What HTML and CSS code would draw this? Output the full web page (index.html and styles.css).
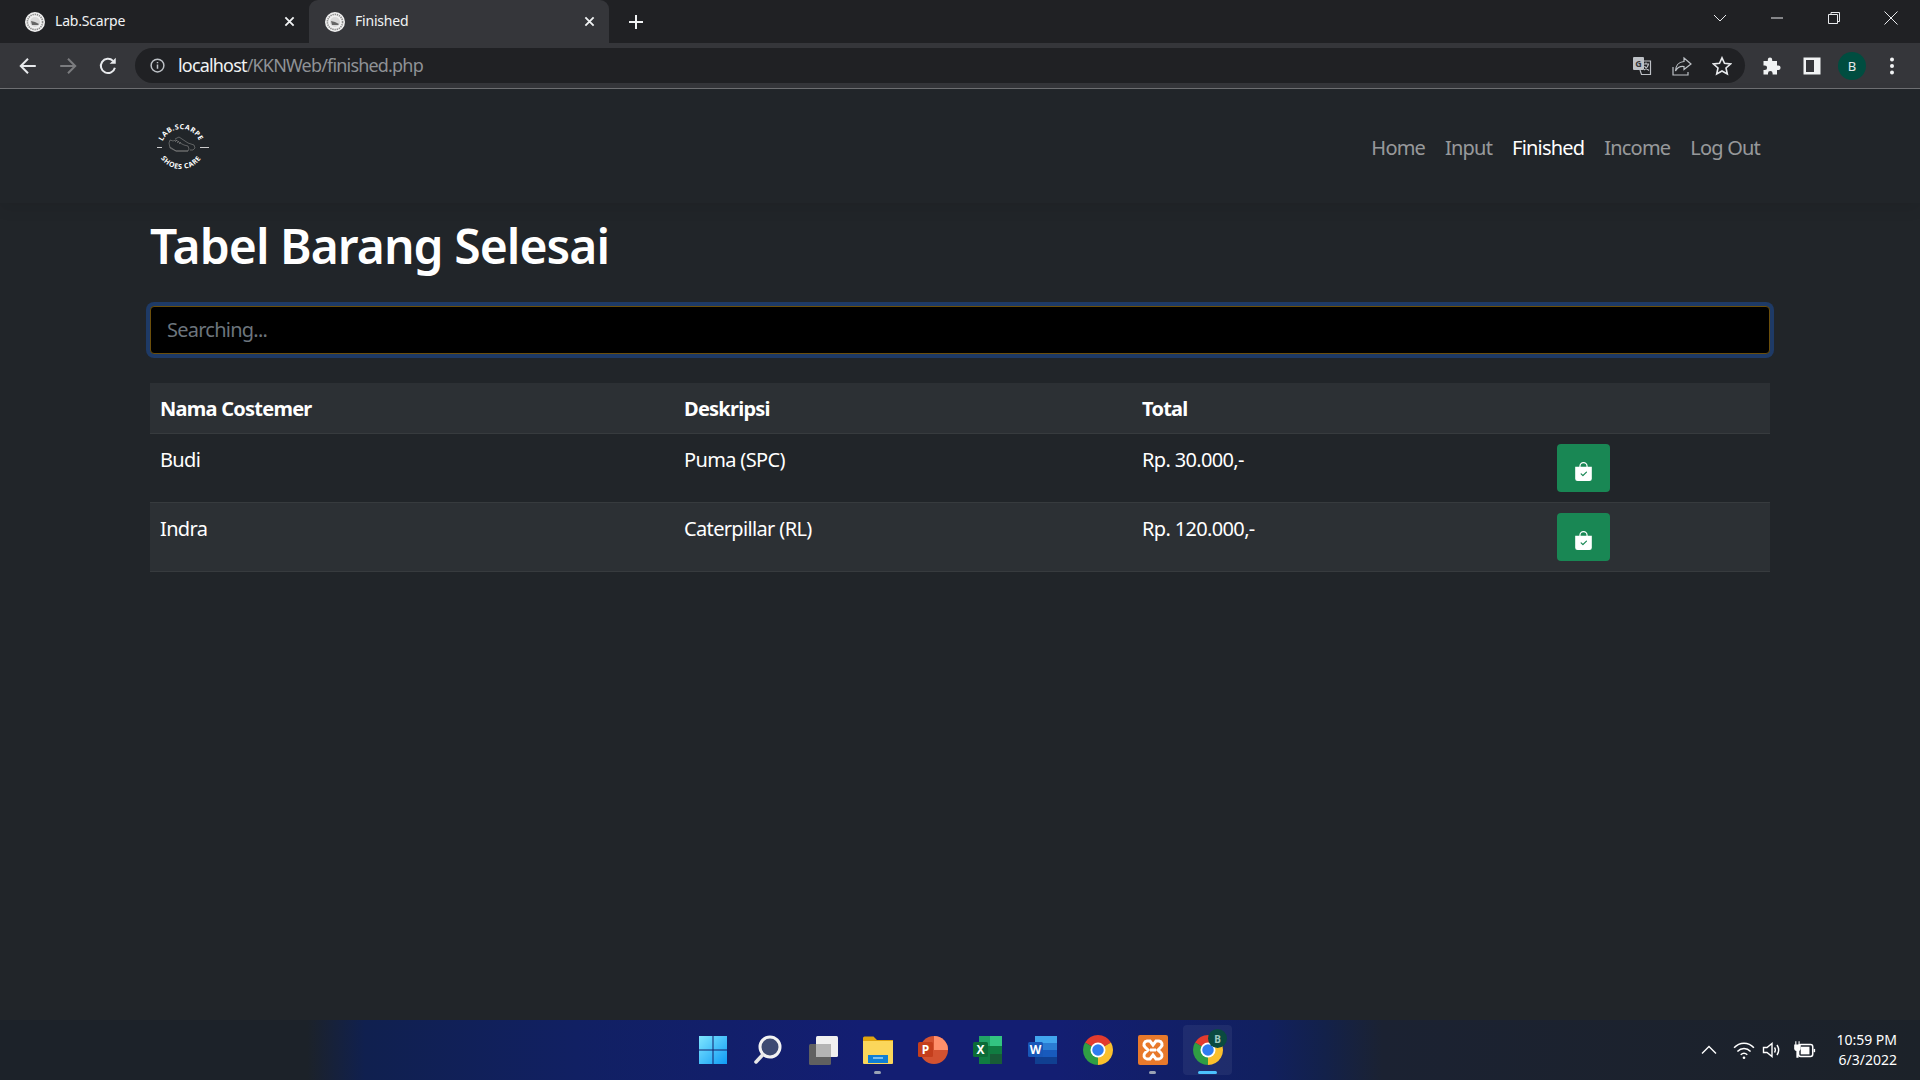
FILE: index.html
```html
<!DOCTYPE html>
<html lang="id">
<head>
    <meta charset="UTF-8">
    <meta name="viewport" content="width=device-width, initial-scale=1.0">
    <title>Finished</title>
    <link rel="stylesheet" href="styles.css">
</head>
<body>
    <svg class="defs" width="0" height="0">
        <symbol id="favicon" viewBox="0 0 20 20">
            <circle cx="10" cy="10" r="10" fill="#f1f1f1"/>
            <circle cx="10" cy="10" r="7.6" fill="none" stroke="#8d8d8d" stroke-width="1.6" stroke-dasharray="1.4 .8"/>
            <circle cx="10" cy="10" r="5" fill="#d9d9d9"/>
            <path d="M6 9l4 1 4 2-1 1H7z" fill="#666"/>
        </symbol>
        <symbol id="chrome" viewBox="0 0 24 24">
            <path d="M12 12L1.61 6A12 12 0 0 1 22.39 6Z" fill="#e33b2e"/>
            <path d="M12 12L22.39 6A12 12 0 0 1 12 24Z" fill="#fbc02d"/>
            <path d="M12 12L12 24A12 12 0 0 1 1.61 6Z" fill="#2f9e44"/>
            <circle cx="12" cy="12" r="6" fill="#fff"/>
            <circle cx="12" cy="12" r="4.6" fill="#2f7df0"/>
        </symbol>
        <symbol id="bag" viewBox="0 0 16 16">
            <path fill="#fff" fill-rule="evenodd" d="M10.5 3.5a2.5 2.5 0 0 0-5 0V4h5v-.5zm1 0V4H15v10a2 2 0 0 1-2 2H3a2 2 0 0 1-2-2V4h3.5v-.5a3.5 3.5 0 1 1 7 0zm-.646 5.354a.5.5 0 0 0-.708-.708L7.5 10.793 6.354 9.646a.5.5 0 1 0-.708.708l1.5 1.5a.5.5 0 0 0 .708 0l3-3z"/>
        </symbol>
    </svg>

    <!-- browser -->
    <div class="tabstrip">
        <div class="tab">
            <svg class="favicon"><use href="#favicon"/></svg>
            <span class="tab-title">Lab.Scarpe</span>
            <svg class="tab-close" viewBox="0 0 12 12"><path d="M1.5 1.5l9 9M10.5 1.5l-9 9"/></svg>
        </div>
        <div class="tab tab-active">
            <svg class="favicon"><use href="#favicon"/></svg>
            <span class="tab-title">Finished</span>
            <svg class="tab-close" viewBox="0 0 12 12"><path d="M1.5 1.5l9 9M10.5 1.5l-9 9"/></svg>
        </div>
        <svg class="tab-new" viewBox="0 0 16 16"><path d="M8 1v14M1 8h14"/></svg>
        <div class="window-btns">
            <svg class="win-icon" viewBox="0 0 14 14"><path d="M1 4l6 6 6-6"/></svg>
            <svg class="win-icon" viewBox="0 0 14 14"><path d="M1 7h12"/></svg>
            <svg class="win-icon" viewBox="0 0 14 14"><path d="M1.5 3.5h9v9h-9zM4 3.5V1.5h8.500v9H10.500"/></svg>
            <svg class="win-icon" viewBox="0 0 14 14"><path d="M.5.5l13 13M13.500.5l-13 13"/></svg>
        </div>
    </div>

    <div class="toolbar">
        <svg class="nav-icon" viewBox="0 0 18 18"><path d="M16 9H3M9 2.500L2.500 9 9 15.500"/></svg>
        <svg class="nav-icon nav-icon-off" viewBox="0 0 18 18"><path d="M2 9h13M9 2.500L15.500 9 9 15.500"/></svg>
        <svg class="nav-icon" viewBox="0 0 18 18"><path d="M15.200 10.500A6.400 6.400 0 1 1 13.500 4.400"/><path class="solid" d="M16 1.500V7h-5.500z"/></svg>
        <div class="omnibox">
            <svg class="info-icon" viewBox="0 0 16 16"><circle cx="8" cy="8" r="6.800"/><path d="M8 7v4.500M8 4.200v1.500"/></svg>
            <span class="url"><span class="url-host">localhost</span>/KKNWeb/finished.php</span>
            <div class="omni-actions">
                <svg class="omni-icon" viewBox="0 0 20 20"><rect class="solid-gray" x="1" y="1" width="11" height="13" rx="1"/><text class="omni-letter" x="6.500" y="10.500">G</text><path d="M8 5h10.500v13.500H9.500L8 14M11 8h6M14 6.500V8M12 14c2.500-1.500 4-3.500 4.500-6M12.500 10c1 2 2.500 3.500 4.500 4.500"/></svg>
                <svg class="omni-icon" viewBox="0 0 20 20"><path d="M12 2l7 6-7 5.500V10.500C8 10 5 12 3.500 15 3.500 10 6.500 6 12 5.500zM1 11v8h15v-3"/></svg>
                <svg class="omni-icon omni-star" viewBox="0 0 20 20"><path d="M10 1.800l2.500 5.500 6 .7-4.500 4 1.300 6L10 15l-5.300 3 1.300-6-4.500-4 6-.7z"/></svg>
            </div>
        </div>
        <div class="tool-actions">
            <svg class="tool-icon" viewBox="0 0 20 20"><path fill="#f1f3f4" d="M8 1.500a2.200 2.200 0 0 1 2.200 2.200V5H15v4.400h1.300a2.300 2.300 0 0 1 0 4.600H15v4.500h-4.400v-1.300a2.300 2.300 0 0 0-4.600 0v1.300H1.500V14h1.300a2.300 2.300 0 0 0 0-4.600H1.500V5h4.300V3.700A2.200 2.200 0 0 1 8 1.500z"/></svg>
            <svg class="tool-icon" viewBox="0 0 20 20"><path fill="#f1f3f4" fill-rule="evenodd" d="M1.500 1.500h17v17h-17zM4 4v12h8V4z"/></svg>
            <span class="avatar">B</span>
            <svg class="tool-icon" viewBox="0 0 20 20"><circle cx="10" cy="3.500" r="2" fill="#f1f3f4"/><circle cx="10" cy="10" r="2" fill="#f1f3f4"/><circle cx="10" cy="16.500" r="2" fill="#f1f3f4"/></svg>
        </div>
    </div>

    <!-- page -->
    <main class="page">
        <nav class="navbar">
            <svg class="logo" viewBox="0 0 60 60">
                <defs>
                    <path id="arc-top" d="M10 32A20 20 0 0 1 50 32"/>
                    <path id="arc-bottom" d="M6 28A24 24 0 0 0 54 28"/>
                </defs>
                <text class="logo-text"><textPath href="#arc-top" startOffset="50%" text-anchor="middle">LAB.SCARPE</textPath></text>
                <text class="logo-text"><textPath href="#arc-bottom" startOffset="50%" text-anchor="middle">SHOES CARE</textPath></text>
                <path class="logo-dash" d="M6 30.500h5M49 30.500h9"/>
                <path class="logo-shoe" d="M18 26l1-3 3 1 3-1 4 3 4 2 4 1 1 3-1 2H25l-6-3zM24 22l4-2 3 2 6 4 6 2 1 3-2 2h-3M19 30l6 4h12M24 25l2-2M26 26l2-2M28 27l2-2"/>
            </svg>
            <ul class="nav-links">
                <li class="nav-link">Home</li>
                <li class="nav-link">Input</li>
                <li class="nav-link nav-link-active">Finished</li>
                <li class="nav-link">Income</li>
                <li class="nav-link">Log Out</li>
            </ul>
        </nav>

        <div class="content">
            <h1 class="title">Tabel Barang Selesai</h1>
            <input class="search" type="text" placeholder="Searching...">
            <table class="table">
                <thead>
                    <tr>
                        <th class="col-name">Nama Costemer</th>
                        <th class="col-desc">Deskripsi</th>
                        <th class="col-total">Total</th>
                        <th></th>
                    </tr>
                </thead>
                <tbody>
                    <tr>
                        <td>Budi</td>
                        <td>Puma (SPC)</td>
                        <td>Rp. 30.000,-</td>
                        <td><button class="btn-done"><svg class="bag-icon"><use href="#bag"/></svg></button></td>
                    </tr>
                    <tr class="row-striped">
                        <td>Indra</td>
                        <td>Caterpillar (RL)</td>
                        <td>Rp. 120.000,-</td>
                        <td><button class="btn-done"><svg class="bag-icon"><use href="#bag"/></svg></button></td>
                    </tr>
                </tbody>
            </table>
        </div>
    </main>

    <!-- taskbar -->
    <footer class="taskbar">
        <div class="task-spacer"></div>
        <div class="task-icons">
            <div class="task-item">
                <svg class="task-icon" viewBox="0 0 30 30">
                    <defs><linearGradient id="win" x1="0" y1="0" x2="1" y2="1"><stop offset="0" stop-color="#7fe6ff"/><stop offset="1" stop-color="#0f9bf5"/></linearGradient></defs>
                    <path fill="url(#win)" d="M1 1h13.500v13.500H1zM15.500 1H29v13.500H15.500zM1 15.500h13.500V29H1zM15.500 15.500H29V29H15.500z"/>
                </svg>
            </div>
            <div class="task-item">
                <svg class="task-icon" viewBox="0 0 30 30"><circle cx="17" cy="12" r="10" fill="#3d4a72" stroke="#f2f2f2" stroke-width="3"/><path d="M9.500 20L3 27" stroke="#e8e8e8" stroke-width="3.500" stroke-linecap="round"/></svg>
            </div>
            <div class="task-item">
                <svg class="task-icon" viewBox="0 0 30 30"><rect x="1" y="9" width="22" height="21" rx="1.500" fill="#606060"/><rect x="8" y="1" width="22" height="21" rx="1.500" fill="#f0f0f0"/><rect x="8" y="9" width="15" height="13" fill="#b4b4b4"/></svg>
            </div>
            <div class="task-item task-open">
                <svg class="task-icon" viewBox="0 0 30 30"><path d="M0 3a1.500 1.500 0 0 1 1.500-1.500h9L14 5h16v6H0z" fill="#e0a40f"/><path d="M0 6h30v22a1 1 0 0 1-1 1H1a1 1 0 0 1-1-1z" fill="#fbd75b"/><path d="M5 29v-8h20v8z" fill="#0f7fd6" transform="translate(0 -1)"/><path d="M10 23h10" stroke="#9fd4f7" stroke-width="1.500"/></svg>
            </div>
            <div class="task-item">
                <svg class="task-icon" viewBox="0 0 30 30"><circle cx="16" cy="15" r="14" fill="#d35230"/><path d="M16 15V1a14 14 0 0 1 14 14z" fill="#ff8f6b"/><rect x="0" y="7" width="15" height="15" rx="1.500" fill="#c43e1c"/><text class="task-letter" x="7.500" y="19">P</text></svg>
            </div>
            <div class="task-item">
                <svg class="task-icon" viewBox="0 0 30 30"><path d="M6 1h23v28H6z" fill="#107c41"/><path d="M17 1h12v10H17z" fill="#33c481"/><path d="M6 1h11v10H6z" fill="#21a366"/><path d="M17 19h12v10H17z" fill="#185c37"/><rect x="0" y="7" width="15" height="15" rx="1.500" fill="#0c6b37"/><text class="task-letter" x="7.500" y="19">X</text></svg>
            </div>
            <div class="task-item">
                <svg class="task-icon" viewBox="0 0 30 30"><path d="M7 1h22v7H7z" fill="#41a5ee"/><path d="M7 8h22v7H7z" fill="#2b7cd3"/><path d="M7 15h22v7H7z" fill="#185abd"/><path d="M7 22h22v7H7z" fill="#103f91"/><rect x="0" y="7" width="15" height="15" rx="1.500" fill="#1857b8"/><text class="task-letter" x="7.500" y="19">W</text></svg>
            </div>
            <div class="task-item">
                <svg class="task-icon"><use href="#chrome"/></svg>
            </div>
            <div class="task-item task-open">
                <svg class="task-icon" viewBox="0 0 30 30"><rect width="30" height="30" rx="2" fill="#e8792b"/><path d="M9 6h3l3 4 3-4h3a3.500 3.500 0 0 1 2 6l-3 3 3 3a3.500 3.500 0 0 1-2 6h-3l-3-4-3 4H9a3.500 3.500 0 0 1-2-6l3-3-3-3a3.500 3.500 0 0 1 2-6z" fill="#e8792b" stroke="#fff" stroke-width="3"/><path d="M12 15h6" stroke="#fff" stroke-width="3"/></svg>
            </div>
            <div class="task-item task-active">
                <svg class="task-icon"><use href="#chrome"/></svg>
                <span class="task-badge">B</span>
            </div>
        </div>
        <div class="tray">
            <svg class="tray-icon tray-caret" viewBox="0 0 18 18"><path d="M2 12.500l7-7 7 7"/></svg>
            <svg class="tray-icon tray-wifi" viewBox="0 0 20 18"><path d="M1 7c5-5.500 13-5.500 18 0M4 10.300c3.500-3.500 8.500-3.500 12 0M7 13.300c1.800-1.600 4.200-1.600 6 0"/><circle class="solid" cx="10" cy="16" r="1.200"/></svg>
            <svg class="tray-icon tray-volume" viewBox="0 0 20 18"><path d="M1.500 6.500h3.500L10 2.500v13L5 11.500H1.500zM12.500 6.500c1 1.500 1 3.500 0 5M15 4c2 3 2 7 0 10"/></svg>
            <svg class="tray-icon tray-battery" viewBox="0 0 22 18"><path class="solid" d="M3 1h1v3h2V1h1v3h1v4a3 3 0 0 1-2 2v6H4v-6a3 3 0 0 1-2-2V4h1z"/><rect x="6" y="4" width="13" height="11" rx="2"/><rect class="solid" x="8" y="6" width="8" height="7"/><path d="M20.500 8v3"/></svg>
            <div class="clock">
                <span>10:59 PM</span>
                <span>6/3/2022</span>
            </div>
        </div>
    </footer>
</body>
</html>
```

FILE: styles.css
```css
* {
    box-sizing: border-box;
}
html, body {
    height: 100%;
}
body {
    margin: 0;
    display: flex;
    flex-direction: column;
    overflow: hidden;
    font-family: "Noto Sans", sans-serif;
    background-color: #212529;
    color: #fff;
}
.defs {
    position: absolute;
}

/* browser */
.tabstrip {
    height: 43px;
    display: flex;
    padding-left: 9px;
    background-color: #202124;
}
.tab {
    width: 300px;
    height: 43px;
    display: flex;
    align-items: center;
    padding: 0 14px 0 16px;
}
.tab-active {
    background-color: #35363a;
    border-radius: 9px 9px 0 0;
}
.favicon {
    width: 20px;
    height: 20px;
    flex-shrink: 0;
}
.tab-title {
    flex: 1;
    margin: 0 0 2px 10px;
    font-size: 14px;
    letter-spacing: -0.2px;
    color: #f1f3f4;
}
.tab-close {
    width: 11px;
    height: 11px;
    fill: none;
    stroke: #f1f3f4;
    stroke-width: 2;
}
.tab-new {
    width: 16px;
    height: 16px;
    margin: 14px 0 0 19px;
    fill: none;
    stroke: #f1f3f4;
    stroke-width: 2;
}
.window-btns {
    margin-left: auto;
    display: flex;
    align-items: center;
    height: 36px;
    gap: 43px;
    padding-right: 22px;
}
.win-icon {
    width: 14px;
    height: 14px;
    fill: none;
    stroke: #e8eaed;
    stroke-width: 1;
}
.toolbar {
    height: 46px;
    padding: 5px 0 5px 18px;
    display: flex;
    align-items: center;
    background-color: #35363a;
    border-bottom: 1px solid #6f7073;
}
.nav-icon {
    width: 20px;
    height: 20px;
    margin-right: 20px;
    fill: none;
    stroke: #e8eaed;
    stroke-width: 1.800;
}
.nav-icon-off {
    stroke: #7b7c7f;
}
.nav-icon .solid {
    fill: #e8eaed;
    stroke: none;
}
.omnibox {
    width: 1610px;
    height: 35px;
    margin-left: -3px;
    display: flex;
    align-items: center;
    padding: 0 13px 0 15px;
    background-color: #202124;
    border-radius: 18px;
}
.info-icon {
    width: 15px;
    height: 15px;
    fill: none;
    stroke: #bdc1c6;
    stroke-width: 1.600;
}
.url {
    margin: 0 0 2px 13px;
    font-size: 18px;
    letter-spacing: -0.82px;
    color: #8f9296;
}
.url-host {
    color: #f1f3f4;
}
.omni-actions {
    margin-left: auto;
    display: flex;
    gap: 20px;
}
.omni-icon {
    width: 20px;
    height: 20px;
    fill: none;
    stroke: #bdc1c6;
    stroke-width: 1.200;
}
.omni-icon .solid-gray {
    fill: #bdc1c6;
    stroke: none;
}
.omni-letter {
    font-size: 9px;
    font-weight: 700;
    fill: #35363a;
    stroke: none;
    text-anchor: middle;
}
.omni-star {
    stroke: #e8eaed;
    stroke-width: 1.600;
}
.tool-actions {
    display: flex;
    align-items: center;
    gap: 20px;
    margin-left: 17px;
}
.tool-icon {
    width: 20px;
    height: 20px;
}
.avatar {
    width: 28px;
    height: 28px;
    margin: 0 -4px;
    display: flex;
    align-items: center;
    justify-content: center;
    border-radius: 50%;
    background-color: #004d40;
    color: #e8eaed;
    font-size: 13px;
}

/* page */
.page {
    flex: 1;
}
.navbar {
    height: 114px;
    padding: 0 150px;
    display: flex;
    align-items: center;
    justify-content: space-between;
    box-shadow: 0 6px 14px rgba(0, 0, 0, .08);
}
.logo {
    width: 60px;
    height: 60px;
    margin: 2px 0 0 1px;
}
.logo-text {
    font-size: 7px;
    font-weight: 700;
    letter-spacing: .5px;
    fill: #fff;
}
.logo-dash {
    stroke: #ccc;
    stroke-width: 1;
}
.logo-shoe {
    fill: none;
    stroke: #8a8a8a;
    stroke-width: .6;
}
.nav-links {
    display: flex;
    gap: 20px;
    list-style: none;
    margin: 3px 10px 0 0;
    padding: 0;
    font-size: 20px;
    letter-spacing: -0.8px;
}
.nav-link {
    color: rgba(255, 255, 255, .55);
}
.nav-link-active {
    color: #fff;
}
.content {
    padding: 0 150px;
}
.title {
    margin: 0 0 31px;
    padding-top: 14px;
    font-size: 48px;
    font-weight: 600;
    line-height: 1.2;
    letter-spacing: -0.95px;
}
.search {
    display: block;
    width: 100%;
    height: 48px;
    padding: 8px 16px;
    font-family: inherit;
    font-size: 20px;
    letter-spacing: -0.75px;
    color: #fff;
    background-color: #000;
    border: 1px solid #6b4e0a;
    border-radius: 4px;
    outline: none;
    box-shadow: 0 0 0 4px #1e3a66;
}
.search::placeholder {
    color: #6c757d;
}
.table {
    width: 100%;
    margin-top: 29px;
    border-collapse: collapse;
    table-layout: fixed;
    font-size: 20px;
    letter-spacing: -0.65px;
}
.col-name {
    width: 524px;
}
.col-desc {
    width: 458px;
}
.col-total {
    width: 415px;
}
th, td {
    padding: 10px;
    text-align: left;
    vertical-align: top;
    line-height: 32px;
    border-bottom: 1px solid #373b3e;
}
th {
    height: 51px;
    padding: 9px 10px 7px;
    font-weight: 700;
    letter-spacing: -0.75px;
    vertical-align: middle;
    background-color: #2c3034;
}
td {
    height: 69px;
}
.row-striped td {
    background-color: #2c3034;
}
.btn-done {
    display: flex;
    align-items: center;
    justify-content: center;
    width: 53px;
    height: 48px;
    padding: 6px 0 0;
    background-color: #198754;
    border: none;
    border-radius: 4px;
}
.bag-icon {
    width: 19px;
    height: 19px;
}

/* taskbar */
.taskbar {
    height: 60px;
    display: grid;
    grid-template-columns: 1fr auto 1fr;
    background: linear-gradient(90deg, #1c2229 0%, #1c2229 16%, #10204f 19%, #112063 30%, #131e72 45%, #131e72 55%, #11205f 66%, #13214a 69%, #1b2232 72%, #1c2229 100%);
}
.task-icons {
    display: flex;
    align-items: center;
}
.task-item {
    position: relative;
    width: 55px;
    height: 50px;
    display: flex;
    align-items: center;
    justify-content: center;
}
.task-open::after, .task-active::after {
    content: "";
    position: absolute;
    bottom: 1px;
    left: 24px;
    width: 7px;
    height: 3px;
    border-radius: 2px;
    background-color: #9aa3b5;
}
.task-active {
    width: 49px;
    margin: 0 3px;
    background-color: rgba(255, 255, 255, .06);
    border-radius: 4px;
}
.task-active::after {
    left: 15px;
    width: 19px;
    background-color: #4cc2ff;
}
.task-icon {
    width: 30px;
    height: 30px;
}
.task-letter {
    font-size: 12px;
    font-weight: 700;
    fill: #fff;
    text-anchor: middle;
}
.task-badge {
    position: absolute;
    top: 4px;
    right: 5px;
    width: 19px;
    height: 19px;
    display: flex;
    align-items: center;
    justify-content: center;
    border-radius: 50%;
    background-color: #0a4a40;
    color: #9fc9c0;
    font-size: 10px;
    font-weight: 700;
}
.tray {
    display: flex;
    align-items: center;
    justify-content: flex-end;
    gap: 7px;
    padding-right: 23px;
}
.tray-icon {
    width: 18px;
    height: 18px;
    fill: none;
    stroke: #fff;
    stroke-width: 1.400;
}
.tray-icon .solid {
    fill: #fff;
    stroke: none;
}
.tray-caret {
    margin-right: 8px;
}
.tray-wifi {
    width: 22px;
    height: 20px;
}
.tray-volume {
    width: 20px;
    height: 20px;
}
.tray-battery {
    width: 24px;
    height: 20px;
    margin-left: 3px;
}
.clock {
    display: flex;
    flex-direction: column;
    align-items: flex-end;
    margin-left: 13px;
    font-size: 14px;
    line-height: 20px;
    color: #fff;
}
```
